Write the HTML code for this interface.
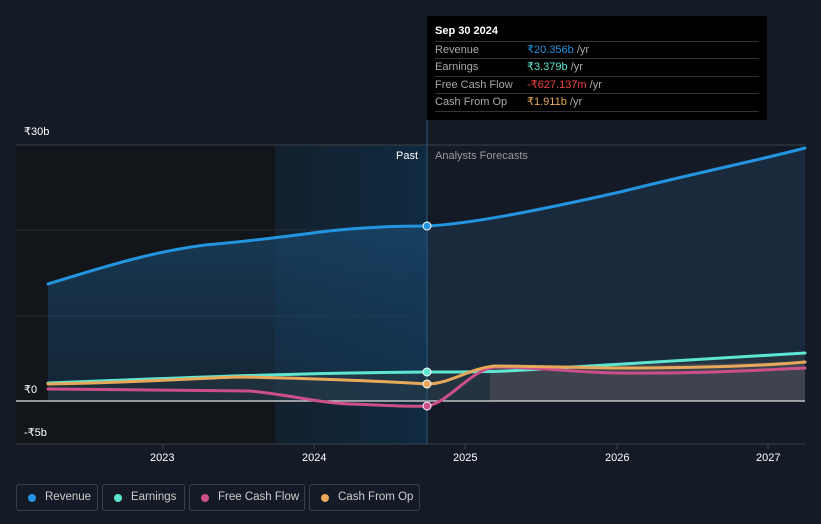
<!DOCTYPE html>
<html><head><meta charset="utf-8"><style>
body{margin:0;width:821px;height:524px;background:#151b26;overflow:hidden;font-family:"Liberation Sans",sans-serif;position:relative}
.t{position:absolute;font-size:11px;color:#fff}
.tip{position:absolute;left:427px;top:16px;width:340px;height:104px;background:#000}
.tip .h{position:absolute;left:8px;top:9px;font-size:11px;font-weight:bold;color:#fff}
.row{position:absolute;left:8px;width:324px;height:17px;border-top:1px solid #333;font-size:11px;color:#aaa;line-height:17px}
.row span{position:absolute;left:92px}
.leg{position:absolute;top:484px;height:27px;border:1px solid #3a404a;border-radius:3px;color:#ccc;font-size:11.5px;line-height:25px;box-sizing:border-box}
.leg i{position:absolute;left:11px;top:9px;width:8px;height:8px;border-radius:50%}
.leg b{font-weight:normal;position:absolute;left:28px}
</style></head><body>
<svg width="821" height="524" style="position:absolute;left:0;top:0">
<defs>
<linearGradient id="pg" x1="0" x2="1"><stop offset="0" stop-color="#13202d"/><stop offset="1" stop-color="#0f2a40"/></linearGradient>
<linearGradient id="rf" x1="0" y1="0" x2="0" y2="1"><stop offset="0" stop-color="#1a4a70" stop-opacity=".8"/><stop offset="1" stop-color="#163a5a" stop-opacity=".5"/></linearGradient>
<clipPath id="cl"><rect x="0" y="0" width="427" height="524"/></clipPath>
<clipPath id="cr"><rect x="427" y="0" width="400" height="524"/></clipPath>
</defs>
<rect x="16" y="145" width="259" height="299" fill="#121519"/>
<rect x="275" y="145" width="152" height="299" fill="url(#pg)"/>
<line x1="16" y1="145" x2="805" y2="145" stroke="#3a404a"/>
<line x1="16" y1="230" x2="805" y2="230" stroke="#2a3038"/>
<line x1="16" y1="316" x2="805" y2="316" stroke="#2a3038"/>
<path clip-path="url(#cl)" d="M48,284 C100,268 150,252 205,245 C240,242 275,238 320,232 C360,227 400,226 427,226 L427,401 L48,401Z" fill="url(#rf)" opacity=".85"/>
<path clip-path="url(#cr)" d="M427,226 C470,224 540,210 620,192 C700,172 760,160 805,148 L805,401 L427,401Z" fill="#1a2c40" opacity=".9"/>
<path d="M48,383 L427,372 L805,353 L805,401 L48,401Z" fill="#3a4a4a" opacity=".3"/>
<path d="M490,367 L805,362 L805,401 L490,401Z" fill="#4a4a52" opacity=".75"/>
<line x1="16" y1="401" x2="805" y2="401" stroke="#e0e0e0" stroke-width="1.2"/>
<line x1="16" y1="444" x2="805" y2="444" stroke="#3a404a"/>
<line x1="427" y1="120" x2="427" y2="444" stroke="#2a5a80"/>
<g stroke-width="3" fill="none" stroke-linecap="round">
<path d="M48,284 C100,268 150,252 205,245 C240,242 275,238 320,232 C360,227 400,226 427,226 C470,224 540,210 620,192 C700,172 760,160 805,148" stroke="#2394df"/>
<path d="M48,383 C200,377 300,373 427,372 C470,372 500,372 540,369 C620,364 700,359 805,353" stroke="#5ee6d0"/>
<path d="M48,389 C150,390 200,390 250,391 C290,395 320,403 350,404 C380,405 410,407 427,406 C450,402 470,370 495,367 C540,367 580,373 620,373 C700,374 760,370 805,368" stroke="#cc4f8a"/>
<path d="M48,384 C150,382 200,378 240,377 C300,378 380,381 427,384 C450,384 470,368 495,366 C540,366 580,368 620,368 C700,368 760,366 805,362" stroke="#e8a85a"/>
</g>
<g stroke="#fff" stroke-width="1">
<circle cx="427" cy="226" r="4" fill="#2394df"/>
<circle cx="427" cy="372" r="4" fill="#5ee6d0"/>
<circle cx="427" cy="384" r="4" fill="#e8a85a"/>
<circle cx="427" cy="406" r="4" fill="#cc4f8a"/>
</g>
<g stroke="#3a404a"><line x1="163" y1="444" x2="163" y2="449"/><line x1="314" y1="444" x2="314" y2="449"/><line x1="465" y1="444" x2="465" y2="449"/><line x1="617" y1="444" x2="617" y2="449"/><line x1="768" y1="444" x2="768" y2="449"/></g>
</svg>
<div class="t" style="left:24px;top:125px">₹30b</div>
<div class="t" style="left:24px;top:383px">₹0</div>
<div class="t" style="left:24px;top:426px">-₹5b</div>
<div class="t" style="left:396px;top:150px">Past</div>
<div class="t" style="left:435px;top:150px;color:#999">Analysts Forecasts</div>
<div class="t" style="left:150px;top:452px">2023</div>
<div class="t" style="left:302px;top:452px">2024</div>
<div class="t" style="left:453px;top:452px">2025</div>
<div class="t" style="left:605px;top:452px">2026</div>
<div class="t" style="left:756px;top:452px">2027</div>
<div class="tip">
<div class="h">Sep 30 2024</div>
<div class="row" style="top:25px">Revenue<span><em style="font-style:normal;color:#2394df">₹20.356b</em> /yr</span></div>
<div class="row" style="top:42px">Earnings<span><em style="font-style:normal;color:#5ee6d0">₹3.379b</em> /yr</span></div>
<div class="row" style="top:60px">Free Cash Flow<span><em style="font-style:normal;color:#f04040">-₹627.137m</em> /yr</span></div>
<div class="row" style="top:77px">Cash From Op<span><em style="font-style:normal;color:#e8a85a">₹1.911b</em> /yr</span></div>
<div class="row" style="top:95px;height:0"></div>
</div>
<div class="leg" style="left:16px;width:82px"><i style="background:#2394df"></i><b>Revenue</b></div>
<div class="leg" style="left:102px;width:83px"><i style="background:#5ee6d0"></i><b>Earnings</b></div>
<div class="leg" style="left:189px;width:116px"><i style="background:#cc4f8a"></i><b>Free Cash Flow</b></div>
<div class="leg" style="left:309px;width:111px"><i style="background:#e8a85a"></i><b>Cash From Op</b></div>
</body></html>
